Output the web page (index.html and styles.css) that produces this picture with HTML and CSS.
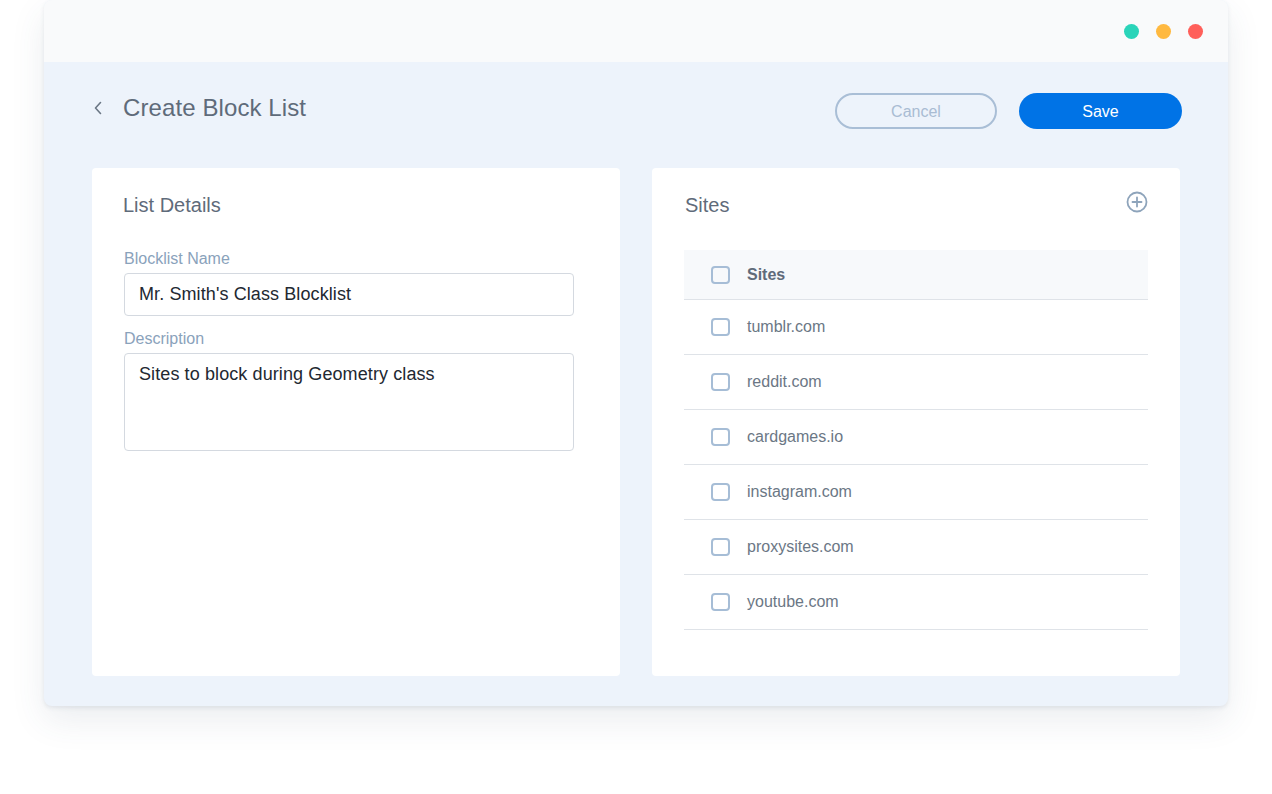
FILE: index.html
```html
<!DOCTYPE html>
<html>
<head>
<meta charset="utf-8">
<link rel="stylesheet" href="styles.css">
</head>
<body>
<div class="window">
  <div class="titlebar">
    <span class="dot dot-green"></span>
    <span class="dot dot-yellow"></span>
    <span class="dot dot-red"></span>
  </div>
  <div class="main">
    <div class="header">
      <div class="title-wrap">
        <svg class="back" width="10" height="14" viewBox="0 0 10 14"><path d="M7.5 1.5 L2.5 7 L7.5 12.5" fill="none" stroke="#6b7785" stroke-width="1.6" stroke-linecap="round" stroke-linejoin="round"/></svg>
        <h1 class="page-title">Create Block List</h1>
      </div>
      <div class="actions">
        <button class="btn btn-cancel">Cancel</button>
        <button class="btn btn-save">Save</button>
      </div>
    </div>
    <div class="cards">
      <div class="card card-details">
        <h2 class="card-title">List Details</h2>
        <label class="field-label">Blocklist Name</label>
        <div class="input">Mr. Smith's Class Blocklist</div>
        <label class="field-label label-desc">Description</label>
        <div class="input textarea">Sites to block during Geometry class</div>
      </div>
      <div class="card card-sites">
        <div class="card-head">
          <h2 class="card-title">Sites</h2>
          <svg class="plus" width="22" height="22" viewBox="0 0 22 22"><circle cx="11" cy="11" r="9.5" fill="none" stroke="#8ea4bb" stroke-width="1.8"/><path d="M11 6.5 V15.5 M6.5 11 H15.5" stroke="#8ea4bb" stroke-width="1.8" stroke-linecap="round"/></svg>
        </div>
        <div class="table">
          <div class="row row-head"><span class="check"></span><span class="cell-head">Sites</span></div>
          <div class="row"><span class="check"></span><span class="cell">tumblr.com</span></div>
          <div class="row"><span class="check"></span><span class="cell">reddit.com</span></div>
          <div class="row"><span class="check"></span><span class="cell">cardgames.io</span></div>
          <div class="row"><span class="check"></span><span class="cell">instagram.com</span></div>
          <div class="row"><span class="check"></span><span class="cell">proxysites.com</span></div>
          <div class="row"><span class="check"></span><span class="cell">youtube.com</span></div>
        </div>
      </div>
    </div>
  </div>
</div>
</body>
</html>
```
FILE: styles.css
```css
* { box-sizing: border-box; }
html, body { margin: 0; padding: 0; background: #ffffff; }
body {
  font-family: "Liberation Sans", Arial, sans-serif;
  width: 1272px;
  height: 794px;
  overflow: hidden;
}
.window {
  margin-left: 44px;
  width: 1184px;
  height: 706px;
  border-radius: 8px;
  overflow: hidden;
  box-shadow: 0 14px 34px rgba(60, 80, 110, 0.10), 0 2px 4px rgba(60, 80, 110, 0.10);
  background: #edf3fb;
}
.titlebar {
  height: 62px;
  background: #f9fafb;
  display: flex;
  align-items: center;
  justify-content: flex-end;
  gap: 17px;
  padding-right: 25px;
}
.dot { width: 15px; height: 15px; border-radius: 50%; display: block; }
.dot-green { background: #2ad4b9; }
.dot-yellow { background: #ffb940; }
.dot-red { background: #ff5f5a; }
.main {
  padding: 31px 48px 30px 48px;
}
.header {
  height: 36px;
  display: flex;
  align-items: center;
  justify-content: space-between;
  margin-right: -2px;
}
.title-wrap { display: flex; align-items: center; }
.back { margin-left: 1px; margin-right: 20px; position: relative; top: -3px; }
.page-title {
  margin: 0;
  font-size: 24px;
  font-weight: 400;
  color: #5f6b7a;
  letter-spacing: 0.1px;
  position: relative;
  top: -3px;
}
.actions { display: flex; gap: 22px; }
.btn {
  height: 36px;
  width: 162px;
  border-radius: 18px;
  font-family: "Liberation Sans", Arial, sans-serif;
  font-size: 16px;
  padding-top: 2px;
  cursor: pointer;
}
.btn-cancel {
  background: transparent;
  border: 2px solid #a9bed6;
  color: #a9bcd3;
}
.btn-save {
  width: 163px;
  background: #0073e6;
  border: none;
  color: #ffffff;
}
.cards {
  margin-top: 39px;
  display: grid;
  grid-template-columns: 528px 528px;
  gap: 32px;
}
.card {
  background: #ffffff;
  border-radius: 4px;
  height: 508px;
}
.card-details { padding: 25px 46px 0 32px; }
.card-title {
  margin: 0;
  font-size: 20px;
  font-weight: 400;
  line-height: 24px;
  color: #5f6b7a;
}
.card-details .card-title { margin-left: -1px; }
.field-label {
  display: block;
  margin-top: 32px;
  font-size: 16px;
  line-height: 20px;
  color: #8aa2bb;
}
.label-desc { margin-top: 13px; }
.input {
  margin-top: 4px;
  width: 450px;
  height: 43px;
  border: 1px solid #d4d9e0;
  border-radius: 4px;
  padding: 0 14px;
  font-size: 18px;
  letter-spacing: 0.1px;
  line-height: 41px;
  color: #222831;
}
.textarea {
  height: 98px;
  line-height: 22px;
  padding-top: 9px;
}
.card-sites { padding: 25px 32px 0 32px; }
.card-head {
  display: flex;
  justify-content: space-between;
  align-items: center;
  margin-left: 1px;
}
.plus { margin-top: -7px; margin-right: 0px; }
.table { margin-top: 33px; }
.row {
  height: 55px;
  display: flex;
  align-items: center;
  padding-left: 27px;
  border-bottom: 1px solid #dfe3e8;
}
.row-head {
  height: 50px;
  background: #f7f9fb;
}
.check {
  width: 19px;
  height: 18px;
  border: 2px solid #a6bdd6;
  border-radius: 4px;
  margin-right: 17px;
  flex: none;
}
.cell { font-size: 16px; color: #6b7785; }
.cell-head { font-size: 16px; font-weight: 700; color: #5f6b7a; }
```
